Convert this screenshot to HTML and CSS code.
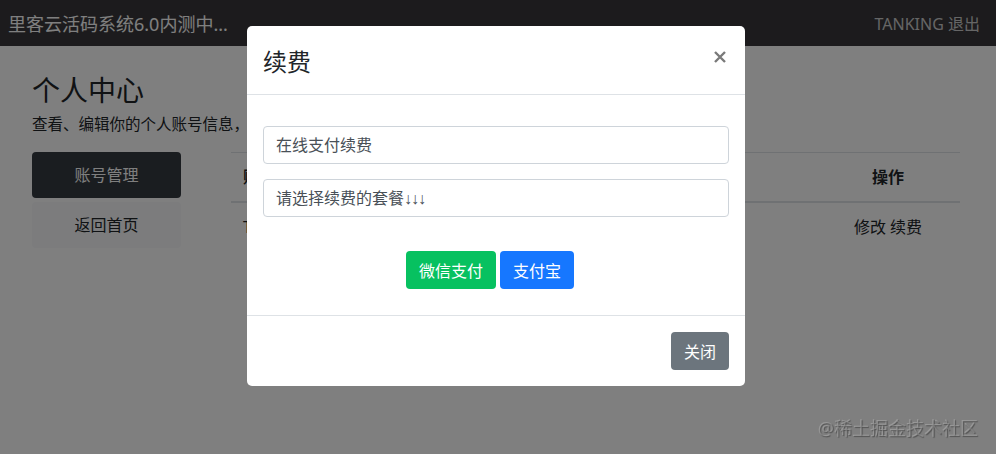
FILE: index.html
```html
<!DOCTYPE html>
<html lang="zh-CN">
<head>
    <meta charset="UTF-8">
    <meta name="viewport" content="width=device-width, initial-scale=1.0">
    <title>个人中心 - 里客云活码系统</title>
    <link rel="stylesheet" href="styles.css">
</head>
<body>
    <nav class="navbar">
        <span class="brand">里客云活码系统6.0内测中...</span>
        <span class="nav-user">TANKING 退出</span>
    </nav>

    <div class="main">
        <h1>个人中心</h1>
        <p class="lead">查看、编辑你的个人账号信息，续费账号</p>

        <div class="row">
            <div class="side-menu">
                <a class="menu-item active">账号管理</a>
                <a class="menu-item">返回首页</a>
            </div>
            <table class="table">
                <colgroup>
                    <col style="width: 190px">
                    <col style="width: 200px">
                    <col style="width: 195px">
                    <col>
                </colgroup>
                <thead>
                    <tr>
                        <th>账号</th>
                        <th>到期时间</th>
                        <th>状态</th>
                        <th class="center">操作</th>
                    </tr>
                </thead>
                <tbody>
                    <tr>
                        <td>TANKING</td>
                        <td>2023-12-31</td>
                        <td>正常</td>
                        <td class="center">修改 续费</td>
                    </tr>
                </tbody>
            </table>
        </div>
    </div>

    <div class="backdrop"></div>

    <div class="modal">
        <div class="modal-header">
            <h4 class="modal-title">续费</h4>
            <button class="close" type="button">
                <svg width="12" height="12" viewBox="0 0 12 12">
                    <path d="M1 1 L11 11 M11 1 L1 11" stroke="#7a7a7a" stroke-width="2.4" fill="none"/>
                </svg>
            </button>
        </div>
        <div class="modal-body">
            <div class="form-control">在线支付续费</div>
            <div class="form-control">请选择续费的套餐<span class="arrows">↓↓↓</span></div>
            <div class="pay-btns">
                <button class="btn btn-wechat">微信支付</button>
                <button class="btn btn-alipay">支付宝</button>
            </div>
        </div>
        <div class="modal-footer">
            <button class="btn btn-secondary">关闭</button>
        </div>
    </div>

    <div class="watermark">@稀土掘金技术社区</div>
</body>
</html>
```

FILE: styles.css
```css
body {
    margin: 0;
    font-family: "Noto Sans", "Noto Sans CJK SC", sans-serif;
    color: #212529;
    background-color: #fff;
}
.navbar {
    height: 46px;
    background-color: #38373a;
    display: flex;
    align-items: center;
    justify-content: space-between;
    padding: 0 16px 0 8px;
}
.brand {
    color: #fff;
    font-size: 18px;
}
.nav-user {
    color: rgba(255,255,255,0.75);
    font-size: 16px;
}
.main {
    padding: 27px 36px 0 32px;
}
h1 {
    font-size: 28px;
    font-weight: 400;
    line-height: 34px;
    margin: 0;
}
.lead {
    font-size: 15.5px;
    line-height: 22px;
    margin: 6px 0 17px;
}
.row {
    display: flex;
    align-items: flex-start;
}
.side-menu {
    width: 149px;
    flex-shrink: 0;
    margin-right: 50px;
    display: flex;
    flex-direction: column;
    gap: 4px;
}
.menu-item {
    height: 46px;
    line-height: 46px;
    text-align: center;
    font-size: 16px;
    border-radius: 4px;
    background-color: #f8f9fa;
    color: #212529;
}
.menu-item.active {
    background-color: #343a40;
    color: #fff;
}
.table {
    flex: 1;
    border-collapse: collapse;
    table-layout: fixed;
    font-size: 16px;
}
.table th,
.table td {
    padding: 12px;
    line-height: 24px;
    text-align: left;
    white-space: nowrap;
    overflow: hidden;
}
.table th {
    border-top: 1px solid #dee2e6;
    border-bottom: 2px solid #dee2e6;
    font-weight: bold;
}
.table .center {
    text-align: center;
}
.backdrop {
    position: fixed;
    top: 0;
    left: 0;
    right: 0;
    bottom: 0;
    background-color: rgba(0,0,0,0.5);
}
.modal {
    position: fixed;
    top: 26px;
    left: 247px;
    width: 498px;
    background-color: #fff;
    border-radius: 5px;
}
.modal-header {
    display: flex;
    align-items: flex-start;
    justify-content: space-between;
    padding: 18px 16px 14px;
    border-bottom: 1px solid #dee2e6;
}
.modal-title {
    margin: 0;
    font-size: 24px;
    font-weight: 400;
    line-height: 36px;
}
.close {
    background: none;
    border: none;
    padding: 0;
    margin: 7px 3px 0 0;
    width: 12px;
    height: 12px;
    display: flex;
}
.modal-body {
    padding: 31px 16px 26px;
}
.form-control {
    box-sizing: border-box;
    height: 38px;
    padding: 0 12px;
    margin-bottom: 15px;
    font-size: 16px;
    line-height: 36px;
    color: #495057;
    border: 1px solid #ced4da;
    border-radius: 4px;
}
.arrows {
    font-family: "Liberation Sans", sans-serif;
    font-size: 16px;
    letter-spacing: -1px;
}
.pay-btns {
    display: flex;
    justify-content: center;
    gap: 4px;
    margin-top: 34px;
    padding-right: 12px;
}
.btn {
    height: 38px;
    padding: 0 12px;
    font-family: inherit;
    font-size: 16px;
    color: #fff;
    border: 1px solid transparent;
    border-radius: 4px;
    cursor: pointer;
}
.btn-wechat {
    background-color: #07c160;
}
.btn-alipay {
    background-color: #1677ff;
}
.btn-secondary {
    background-color: #6c757d;
}
.modal-footer {
    display: flex;
    justify-content: flex-end;
    padding: 16px;
    border-top: 1px solid #dee2e6;
}
.watermark {
    position: fixed;
    right: 18px;
    bottom: 14px;
    font-size: 18px;
    color: rgba(255,255,255,0.22);
    text-shadow: 1px 1px 1px rgba(0,0,0,0.35);
}
```
